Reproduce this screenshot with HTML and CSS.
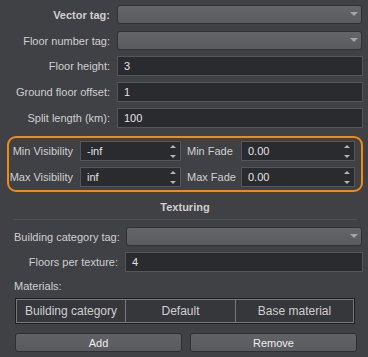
FILE: index.html
```html
<!DOCTYPE html>
<html lang="en">
<head>
  <meta charset="UTF-8">
  <meta name="viewport" content="width=device-width, initial-scale=1.0">
  <title>Building settings</title>
  <link rel="stylesheet" href="styles.css">
</head>
<body>
  <main class="panel">
    <div class="form-grid main-grid">
      <label class="field-label bold">Vector tag:</label>
      <div class="combo"><span class="combo-arrow"></span></div>
      <label class="field-label">Floor number tag:</label>
      <div class="combo"><span class="combo-arrow"></span></div>
      <label class="field-label">Floor height:</label>
      <div class="text-input">3</div>
      <label class="field-label">Ground floor offset:</label>
      <div class="text-input">1</div>
      <label class="field-label">Split length (km):</label>
      <div class="text-input">100</div>
    </div>

    <div class="visibility-box">
      <label class="box-label">Min Visibility</label>
      <div class="spin-input">-inf<span class="spin"></span></div>
      <label class="box-label left">Min Fade</label>
      <div class="spin-input">0.00<span class="spin"></span></div>
      <label class="box-label">Max Visibility</label>
      <div class="spin-input">inf<span class="spin"></span></div>
      <label class="box-label left">Max Fade</label>
      <div class="spin-input">0.00<span class="spin"></span></div>
    </div>

    <h3 class="section-title">Texturing</h3>
    <hr class="separator">

    <div class="form-grid texture-grid">
      <label class="field-label">Building category tag:</label>
      <div class="combo shifted"><span class="combo-arrow"></span></div>
      <label class="field-label">Floors per texture:</label>
      <div class="text-input">4</div>
    </div>

    <div class="materials-label">Materials:</div>
    <table class="materials">
      <colgroup>
        <col class="col-narrow">
        <col class="col-narrow">
        <col>
      </colgroup>
      <tr>
        <th>Building category</th>
        <th>Default</th>
        <th>Base material</th>
      </tr>
    </table>

    <div class="buttons">
      <button class="btn">Add</button>
      <button class="btn">Remove</button>
    </div>
  </main>
</body>
</html>
```

FILE: styles.css
```css
:root {
  --main-font: "Liberation Sans", Arial, sans-serif;
  --bg-color: #404145;
  --label-color: #cfcfcf;
  --value-color: #e2e2e2;
  --input-bg: #2a2b2e;
  --input-border: #55565a;
  --combo-border: #303134;
  --accent-color: #f28a12;
}

html {
  box-sizing: border-box;
  font-family: var(--main-font);
  font-size: 11px;
}

*,
*::before,
*::after {
  box-sizing: inherit;
}

body {
  margin: 0;
  background-color: var(--bg-color);
  color: var(--label-color);
  height: 357px;
  overflow: hidden;
}

.panel {
  padding: 5px 5px 0 7px;
}

.form-grid {
  display: grid;
  column-gap: 7px;
  row-gap: 6px;
  align-items: center;
}

.main-grid {
  grid-template-columns: 96px 1fr;
  grid-template-rows: 20px 19px 20px 20px 20px;
  margin-left: 7px;
}

.texture-grid {
  grid-template-columns: 104px 1fr;
  grid-template-rows: 19px 20px;
  margin-left: 7px;
}

.field-label {
  text-align: right;
  white-space: nowrap;
}

.bold {
  font-weight: bold;
}

.combo {
  position: relative;
  height: 19px;
  align-self: start;
  margin-right: 1px;
  border: 1px solid var(--combo-border);
  border-radius: 3px;
  background: linear-gradient(#646569, #5a5b5f);
}

.combo.shifted {
  margin-left: 1px;
}

.combo-arrow {
  position: absolute;
  right: 3px;
  top: 6px;
  border-left: 4px solid transparent;
  border-right: 4px solid transparent;
  border-top: 4px solid #a3a4a8;
}

.text-input,
.spin-input {
  position: relative;
  height: 20px;
  line-height: 18px;
  padding-left: 6px;
  border: 1px solid var(--input-border);
  background-color: var(--input-bg);
  color: var(--value-color);
}

.visibility-box {
  display: grid;
  grid-template-columns: 64px 101px 46px 1fr;
  grid-template-rows: 20px 20px;
  column-gap: 7px;
  row-gap: 6px;
  align-items: center;
  margin-top: 8px;
  padding: 3px 6px 3px 0;
  border: 2px solid var(--accent-color);
  border-radius: 9px;
}

.box-label {
  text-align: right;
  white-space: nowrap;
}

.box-label.left {
  text-align: left;
  margin-left: -1px;
}

.spin::before,
.spin::after {
  content: "";
  position: absolute;
  right: 4px;
  border-left: 3px solid transparent;
  border-right: 3px solid transparent;
}

.spin::before {
  top: 3px;
  border-bottom: 3px solid #b4b5b9;
}

.spin::after {
  bottom: 2px;
  border-top: 3px solid #b4b5b9;
}

.section-title {
  margin: 8px 0 0;
  font-size: 11px;
  line-height: 14px;
  text-align: center;
}

.separator {
  margin: 5px 6px 7px 7px;
  border: 0;
  border-top: 1px solid #505155;
}

.materials-label {
  margin: 7px 0 0 7px;
  line-height: 14px;
}

.materials {
  width: 340px;
  margin: 5px 0 0 8px;
  table-layout: fixed;
  border-collapse: separate;
  border-spacing: 0;
  border: 1px solid #1e1f22;
  background-color: #36373b;
}

.col-narrow {
  width: 110px;
}

.materials th {
  height: 24px;
  padding: 0;
  font-size: 12px;
  font-weight: normal;
  color: var(--label-color);
  border: 1px solid #76777b;
  border-left-width: 0;
}

.materials th:first-child {
  border-left-width: 1px;
}

.buttons {
  display: flex;
  gap: 8px;
  margin: 9px 6px 0 8px;
}

.btn {
  flex: 1;
  height: 19px;
  padding: 0;
  font-family: var(--main-font);
  font-size: 11px;
  color: #ececec;
  border: 1px solid #2e2f32;
  border-radius: 3px;
  background: linear-gradient(#616266, #595a5e);
}
```
